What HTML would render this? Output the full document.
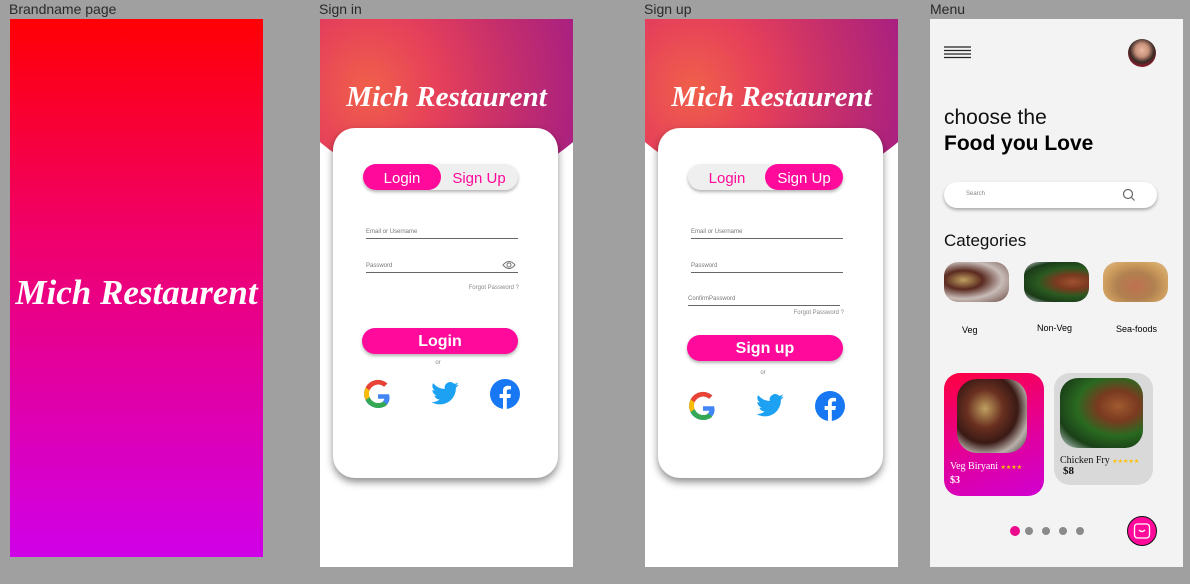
<!DOCTYPE html>
<html><head><meta charset="utf-8"><style>
*{margin:0;padding:0;box-sizing:border-box}
body{width:1190px;height:584px;background:#a0a0a0;position:relative;overflow:hidden;font-family:"Liberation Sans",sans-serif}
.a{position:absolute}
.lbl{font-size:14px;color:#2a2a2a;top:1px}
.frame{position:absolute;top:19px;width:253px;height:548px;background:#fff;overflow:hidden}
.brand{font-family:"Liberation Serif",serif;font-style:italic;font-weight:bold;color:#fff;white-space:nowrap}
.hdr{position:absolute;left:-70px;top:-230px;width:393px;height:400px;border-radius:50%;background:radial-gradient(ellipse at 30% 75%,#f0604a 0,#e6405a 18%,#c8306a 35%,#a92080 55%,#c040b0 75%);overflow:hidden}
.card{position:absolute;left:13px;top:109px;width:225px;height:350px;background:#fff;border-radius:22px;box-shadow:0 4px 8px rgba(0,0,0,.45)}
.tog{position:absolute;left:30px;top:36px;width:155px;height:26px;border-radius:13px;background:#efefef;box-shadow:0 2px 3px rgba(0,0,0,.3);font-size:15px;color:#ff0a9a}
.tog span{position:absolute;top:0;height:26px;line-height:29px;width:78px;text-align:center;border-radius:13px}
.on{background:#ff0a9a;color:#fff}
.fld{position:absolute;left:33px;width:152px;border-bottom:1.3px solid #666;font-size:6px;color:#777;height:10px}
.fg{position:absolute;right:39px;font-size:6px;color:#888}
.btn{position:absolute;left:29px;width:156px;height:26px;border-radius:13px;background:#ff0a9a;color:#fff;font-weight:bold;font-size:16px;text-align:center;line-height:27px;box-shadow:0 2px 3px rgba(0,0,0,.3)}
.or{position:absolute;left:0;width:210px;text-align:center;font-size:6px;color:#888}
.ic{position:absolute;width:30px;height:30px}
</style></head><body>
<div class="a lbl" style="left:9px">Brandname page</div>
<div class="a lbl" style="left:319px">Sign in</div>
<div class="a lbl" style="left:644px">Sign up</div>
<div class="a lbl" style="left:930px">Menu</div>

<div class="a" style="left:10px;top:19px;width:253px;height:538px;background:linear-gradient(#ff0004,#f0006a 40%,#d000e8)">
<div class="a brand" style="left:-10px;width:273px;top:254px;text-align:center;font-size:35px">Mich Restaurent</div></div>

<!-- Sign in -->
<div class="frame" style="left:320px">
<div class="hdr"></div>
<div class="a brand" style="left:0;width:253px;top:62px;text-align:center;font-size:29px">Mich Restaurent</div>
<div class="card">
<div class="tog"><span class="on" style="left:0">Login</span><span style="right:0">Sign Up</span></div>
<div class="fld" style="top:101px">Email or Username</div>
<div class="fld" style="top:135px">Password</div>
<svg class="a" style="left:169px;top:131px" width="14" height="12" viewBox="0 0 14 12"><path d="M1 6Q7-1 13 6Q7 13 1 6Z" fill="none" stroke="#777"/><circle cx="7" cy="6" r="2" fill="none" stroke="#777"/></svg>
<div class="fg" style="top:157px">Forgot Password ?</div>
<div class="btn" style="top:200px">Login</div>
<div class="or" style="top:232px">or</div>
<svg class="ic" style="left:30px;top:251px" viewBox="0 0 30 30"><path d="M26 15.3H15v4.5h6.3c-.6 3-3.2 4.7-6.3 4.7a9.5 9.5 0 010-19c2.4 0 4.5.9 6.1 2.3l3.3-3.3A14 14 0 0015 1a14 14 0 000 28c7.5 0 13.5-5.5 11-13.7z" fill="#4285f4"/><path d="M2.6 8.5l3.9 2.9A9.5 9.5 0 0115 5.5c2.4 0 4.5.9 6.1 2.3l3.3-3.3A14 14 0 002.6 8.5z" fill="#ea4335"/><path d="M15 29c3.7 0 7-1.2 9.3-3.4l-3.8-3A9.5 9.5 0 016.6 18l-4 3A14 14 0 0015 29z" fill="#34a853"/><path d="M2.6 8.5a14 14 0 000 12.5l4-3a9.5 9.5 0 010-6.6z" fill="#fbbc05"/></svg>
<svg class="ic" style="left:97px;top:251px" viewBox="0 0 24 24"><path d="M23 4.6a9 9 0 01-2.6.7 4.6 4.6 0 002-2.5 9 9 0 01-2.9 1.1A4.5 4.5 0 0011.8 8 12.8 12.8 0 012.5 3.3a4.5 4.5 0 001.4 6 4.5 4.5 0 01-2-.6 4.5 4.5 0 003.6 4.5 4.5 4.5 0 01-2 .1 4.5 4.5 0 004.2 3.1A9 9 0 011 18.3 12.8 12.8 0 007.9 20.3c8.3 0 12.8-6.9 12.8-12.8v-.6A9 9 0 0023 4.6z" fill="#1da1f2"/></svg>
<svg class="ic" style="left:157px;top:251px" viewBox="0 0 30 30"><circle cx="15" cy="15" r="15" fill="#1877f2"/><path d="M16.8 30V19h3.5l.6-4h-4.1v-2.6c0-1.2.5-2 2.1-2h2.1V7a24 24 0 00-3-.2c-3.1 0-5 1.8-5 5.1V15H9.6v4H13v11z" fill="#fff"/></svg>
</div></div>

<!-- Sign up -->
<div class="frame" style="left:645px">
<div class="hdr"></div>
<div class="a brand" style="left:0;width:253px;top:62px;text-align:center;font-size:29px">Mich Restaurent</div>
<div class="card">
<div class="tog"><span style="left:0">Login</span><span class="on" style="right:0">Sign Up</span></div>
<div class="fld" style="top:101px">Email or Username</div>
<div class="fld" style="top:135px">Password</div>
<div class="fld" style="top:168px;left:30px;width:152px">ConfirmPassword</div>
<div class="fg" style="top:182px">Forgot Password ?</div>
<div class="btn" style="top:207px">Sign up</div>
<div class="or" style="top:242px">or</div>
<svg class="ic" style="left:30px;top:263px" viewBox="0 0 30 30"><path d="M26 15.3H15v4.5h6.3c-.6 3-3.2 4.7-6.3 4.7a9.5 9.5 0 010-19c2.4 0 4.5.9 6.1 2.3l3.3-3.3A14 14 0 0015 1a14 14 0 000 28c7.5 0 13.5-5.5 11-13.7z" fill="#4285f4"/><path d="M2.6 8.5l3.9 2.9A9.5 9.5 0 0115 5.5c2.4 0 4.5.9 6.1 2.3l3.3-3.3A14 14 0 002.6 8.5z" fill="#ea4335"/><path d="M15 29c3.7 0 7-1.2 9.3-3.4l-3.8-3A9.5 9.5 0 016.6 18l-4 3A14 14 0 0015 29z" fill="#34a853"/><path d="M2.6 8.5a14 14 0 000 12.5l4-3a9.5 9.5 0 010-6.6z" fill="#fbbc05"/></svg>
<svg class="ic" style="left:97px;top:263px" viewBox="0 0 24 24"><path d="M23 4.6a9 9 0 01-2.6.7 4.6 4.6 0 002-2.5 9 9 0 01-2.9 1.1A4.5 4.5 0 0011.8 8 12.8 12.8 0 012.5 3.3a4.5 4.5 0 001.4 6 4.5 4.5 0 01-2-.6 4.5 4.5 0 003.6 4.5 4.5 4.5 0 01-2 .1 4.5 4.5 0 004.2 3.1A9 9 0 011 18.3 12.8 12.8 0 007.9 20.3c8.3 0 12.8-6.9 12.8-12.8v-.6A9 9 0 0023 4.6z" fill="#1da1f2"/></svg>
<svg class="ic" style="left:157px;top:263px" viewBox="0 0 30 30"><circle cx="15" cy="15" r="15" fill="#1877f2"/><path d="M16.8 30V19h3.5l.6-4h-4.1v-2.6c0-1.2.5-2 2.1-2h2.1V7a24 24 0 00-3-.2c-3.1 0-5 1.8-5 5.1V15H9.6v4H13v11z" fill="#fff"/></svg>
</div></div>

<!-- Menu -->
<div class="frame" style="left:930px;background:#f3f3f3">
<svg class="a" style="left:14px;top:27px" width="27" height="13"><path d="M0 1h27M0 4.5h27M0 8h27M0 11.5h27" stroke="#222" stroke-width="1.2"/></svg>
<div class="a" style="left:198px;top:20px;width:28px;height:28px;border-radius:50%;background:radial-gradient(circle at 50% 40%,#e8b9a0 0,#c8907a 30%,#3a2a25 55%,#a01830 80%)"></div>
<div class="a" style="left:14px;top:87px;font-size:21px;color:#111">choose the</div>
<div class="a" style="left:14px;top:113px;font-size:21px;font-weight:bold;color:#000">Food you Love</div>
<div class="a" style="left:14px;top:163px;width:213px;height:26px;border-radius:13px;background:#fff;box-shadow:0 2px 3px rgba(0,0,0,.3)"><span class="a" style="left:22px;top:9px;font-size:6px;color:#888">Search</span>
<svg class="a" style="left:178px;top:6px" width="14" height="14"><circle cx="6" cy="6" r="4.5" fill="none" stroke="#666" stroke-width="1.2"/><path d="M9.5 9.5l3 3" stroke="#666" stroke-width="1.2"/></svg></div>
<div class="a" style="left:14px;top:212px;font-size:17px;color:#111">Categories</div>
<div class="a" style="left:14px;top:243px;width:65px;height:40px;border-radius:14px;background:radial-gradient(ellipse at 30% 45%,#c0a060 0,#5a2a20 30%,#c8bcb8 60%,#6a4a40)"></div>
<div class="a" style="left:94px;top:243px;width:65px;height:40px;border-radius:14px;background:radial-gradient(ellipse at 75% 50%,#a05030 0,#7a3a20 25%,#2a5a20 50%,#1a3a18 75%,#d0d8e0)"></div>
<div class="a" style="left:173px;top:243px;width:65px;height:40px;border-radius:14px;background:radial-gradient(ellipse at 50% 60%,#c07050 0,#b08050 40%,#d0a060 70%,#e0c090)"></div>
<div class="a" style="left:32px;top:306px;font-size:9px">Veg</div>
<div class="a" style="left:107px;top:304px;font-size:9px">Non-Veg</div>
<div class="a" style="left:186px;top:305px;font-size:9px">Sea-foods</div>
<div class="a" style="left:14px;top:354px;width:100px;height:123px;border-radius:16px;background:linear-gradient(160deg,#ff0040,#e000a0 60%,#d000d0)">
<div class="a" style="left:13px;top:6px;width:70px;height:74px;border-radius:20px;background:radial-gradient(ellipse at 40% 40%,#c0a060 0,#6a3020 30%,#3a1a15 55%,#bab0ab 75%,#333)"></div>
<div class="a" style="left:6px;top:88px;font-family:'Liberation Serif',serif;font-size:10px;color:#fff">Veg Biryani <span style="color:#ffc000;font-size:6px">★★★★</span></div>
<div class="a" style="left:6px;top:102px;font-family:'Liberation Serif',serif;font-size:10px;font-weight:bold;color:#fff">$3</div></div>
<div class="a" style="left:124px;top:354px;width:99px;height:112px;border-radius:16px;background:#d9d9d9">
<div class="a" style="left:6px;top:5px;width:83px;height:70px;border-radius:18px;background:radial-gradient(ellipse at 70% 40%,#a05a30 0,#7a3a20 25%,#2a6a20 50%,#1a4018 75%,#d0dde0)"></div>
<div class="a" style="left:6px;top:82px;font-family:'Liberation Serif',serif;font-size:10px;color:#111">Chicken Fry <span style="color:#ffc000;font-size:6px">★★★★★</span></div>
<div class="a" style="left:9px;top:92px;font-family:'Liberation Serif',serif;font-size:11px;font-weight:bold;color:#111">$8</div></div>
<div class="a" style="left:80px;top:507px;width:10px;height:10px;border-radius:50%;background:#ec0a8c"></div>
<div class="a" style="left:95px;top:508px;width:8px;height:8px;border-radius:50%;background:#8a8a8a"></div>
<div class="a" style="left:112px;top:508px;width:8px;height:8px;border-radius:50%;background:#8a8a8a"></div>
<div class="a" style="left:129px;top:508px;width:8px;height:8px;border-radius:50%;background:#8a8a8a"></div>
<div class="a" style="left:146px;top:508px;width:8px;height:8px;border-radius:50%;background:#8a8a8a"></div>
<div class="a" style="left:197px;top:497px;width:30px;height:30px;border-radius:50%;background:#ff0a9a;border:1.5px solid #111">
<svg class="a" style="left:5px;top:5px" width="18" height="18"><rect x="1.5" y="2" width="15" height="14" rx="3" fill="none" stroke="#fff" stroke-width="1.3"/><path d="M6 8q3 3 6 0" fill="none" stroke="#fff" stroke-width="1.3"/></svg></div>
</div>
</body></html>
